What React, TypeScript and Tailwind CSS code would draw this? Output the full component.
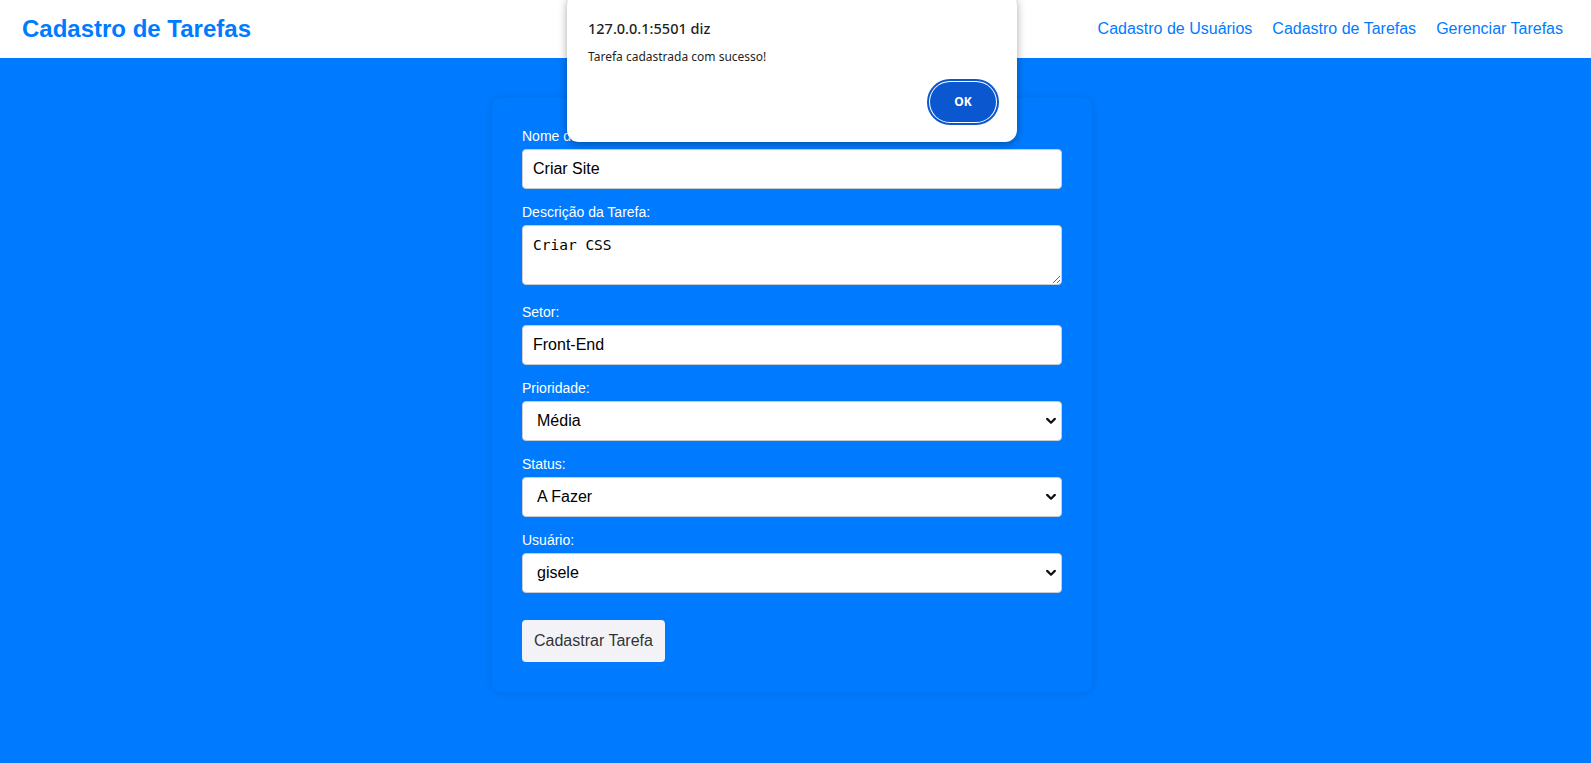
import React from "react";

function Chevron() {
  return (
    <svg
      className="pointer-events-none absolute right-[6px] top-1/2 -translate-y-1/2"
      width="10"
      height="7"
      viewBox="0 0 10 7"
      fill="none"
    >
      <path d="M1.2 1.4 L5 5.2 L8.8 1.4" stroke="#111" strokeWidth="2.2" strokeLinecap="round" strokeLinejoin="round" />
    </svg>
  );
}

function Field({ label, children }: { label: string; children: React.ReactNode }) {
  return (
    <>
      <label className="block text-[14px] leading-[16px] text-white mb-[5px]">{label}</label>
      {children}
    </>
  );
}

function SelectField({ value, options }: { value: string; options: string[] }) {
  return (
    <div className="relative mb-[15px]">
      <select
        defaultValue={value}
        className="block w-full h-[40px] appearance-none rounded-[4px] border border-[#ccc] bg-white pl-[14px] pr-[24px] text-[16px] text-black outline-none"
        style={{ fontFamily: '"Liberation Sans", Arial, sans-serif' }}
      >
        {options.map((o) => (
          <option key={o} value={o}>
            {o}
          </option>
        ))}
      </select>
      <Chevron />
    </div>
  );
}

export default function App() {
  return (
    <div
      className="relative min-h-[763px] w-full overflow-hidden bg-[#007bff]"
      style={{ fontFamily: '"Liberation Sans", Arial, sans-serif' }}
    >
      <header className="flex h-[58px] items-center justify-between bg-white pl-[22px] pr-[18px]">
        <h1 className="text-[24px] font-bold leading-[28px] text-[#007bff]">Cadastro de Tarefas</h1>
        <nav className="flex items-center">
          <a className="mx-[10px] text-[16px] text-[#007bff]" href="#">
            Cadastro de Usuários
          </a>
          <a className="mx-[10px] text-[16px] text-[#007bff]" href="#">
            Cadastro de Tarefas
          </a>
          <a className="mx-[10px] text-[16px] text-[#007bff]" href="#">
            Gerenciar Tarefas
          </a>
        </nav>
      </header>

      <main className="flex justify-center pr-[7px] pt-[40px]">
        <form className="w-[600px] rounded-[8px] bg-[#007bff] p-[30px] shadow-[0_0_10px_rgba(0,0,0,0.12)]">
          <Field label="Nome da Tarefa:">
            <input
              defaultValue="Criar Site"
              className="mb-[15px] block h-[40px] w-full rounded-[4px] border border-[#ccc] bg-white px-[10px] text-[16px] text-black outline-none"
            />
          </Field>
          <Field label="Descrição da Tarefa:">
            <textarea
              defaultValue="Criar CSS"
              className="mb-[19px] block h-[60px] w-full rounded-[4px] border border-[#ccc] bg-white px-[10px] py-[10px] text-[14.5px] leading-[18px] text-black outline-none"
              style={{ fontFamily: '"DejaVu Sans Mono", "Liberation Mono", monospace' }}
            />
          </Field>
          <Field label="Setor:">
            <input
              defaultValue="Front-End"
              className="mb-[15px] block h-[40px] w-full rounded-[4px] border border-[#ccc] bg-white px-[10px] text-[16px] text-black outline-none"
            />
          </Field>
          <Field label="Prioridade:">
            <SelectField value="Média" options={["Baixa", "Média", "Alta"]} />
          </Field>
          <Field label="Status:">
            <SelectField value="A Fazer" options={["A Fazer", "Fazendo", "Pronto"]} />
          </Field>
          <Field label="Usuário:">
            <div className="mt-[1px]">
              <SelectField value="gisele" options={["gisele"]} />
            </div>
          </Field>
          <button
            type="button"
            className="mt-[27px] block h-[42px] rounded-[4px] bg-[#f3f3f7] px-[12px] text-[16px] text-[#333]"
          >
            Cadastrar Tarefa
          </button>
        </form>
      </main>

      <div
        className="absolute left-[567px] top-[-6px] w-[450px] rounded-[12px] bg-white px-[21px] pt-[24px] pb-[20px] shadow-[0_2px_8px_rgba(0,0,0,0.35)]"
        style={{ fontFamily: '"Noto Sans", "Open Sans", sans-serif' }}
      >
        <div className="text-[14.5px] font-medium leading-[20px] text-[#1f1f1f]">127.0.0.1:5501 diz</div>
        <div className="mt-[11px] text-[12px] leading-[16px] text-[#1f1f1f]">Tarefa cadastrada com sucesso!</div>
        <div className="mt-[17px] flex justify-end">
          <button
            type="button"
            className="h-[40px] w-[66px] rounded-full bg-[#0b57d0] text-[12px] font-bold text-white outline outline-2 outline-offset-[1px] outline-[#0b57d0]"
          >
            OK
          </button>
        </div>
      </div>
    </div>
  );
}
